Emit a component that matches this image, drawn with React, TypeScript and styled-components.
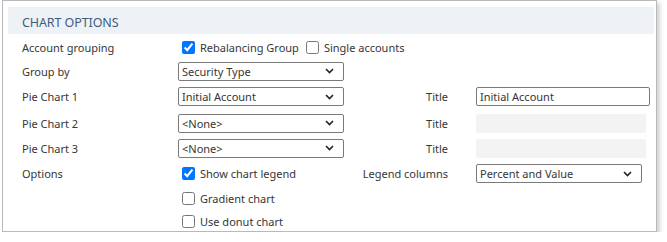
import React from "react";
import styled, { createGlobalStyle } from "styled-components";

const Global = createGlobalStyle`
  html, body { margin: 0; padding: 0; background: #ffffff; }
  body { font-family: "Noto Sans", "Open Sans", Arial, sans-serif; }
`;

const Frame = styled.div`
  margin-left: 2px;
  width: 655px;
  height: 232px;
  box-sizing: border-box;
  border: 1px solid #b9b9b9;
  background: #fff;
  padding: 6px 2px 0 5px;
  box-shadow: 3px 3px 4px rgba(0, 0, 0, 0.18);
  overflow: visible;
`;

const Header = styled.div`
  height: 27px;
  box-sizing: border-box;
  background: #eef2f6;
  display: flex;
  align-items: center;
  padding: 3px 0 0 14px;
  font-size: 12.5px;
  letter-spacing: -0.1px;
  color: #3f5d7d;
`;

const Body = styled.div`
  padding: 2px 0 0 14px;
`;

const Row = styled.div<{ $h: number }>`
  display: grid;
  grid-template-columns: 156px 166px 104px 28px 174px;
  align-items: center;
  height: ${(p) => p.$h}px;
  font-size: 11px;
  color: #363636;
`;

const Label = styled.div`
  grid-column: 1;
`;

const RightLabel = styled.div`
  text-align: right;
  grid-column: 3;
`;

const CheckGroup = styled.div`
  display: flex;
  align-items: center;
  grid-column: 2;
  white-space: nowrap;
  min-width: 0;
`;

const Check = styled.label`
  display: inline-flex;
  align-items: center;
  margin: 0 3px 0 4px;
  gap: 5px;
`;

const Box = styled.input`
  margin: 0;
  width: 13px;
  height: 13px;
`;

const Select = styled.div<{ $col?: number; $w?: number }>`
  grid-column: ${(p) => p.$col ?? 2};
  width: ${(p) => p.$w ?? 166}px;
  height: 19px;
  box-sizing: border-box;
  border: 1px solid #7a7a7a;
  border-radius: 2px;
  display: flex;
  align-items: center;
  justify-content: space-between;
  padding: 0 9px 0 3px;
  background: #fff;
`;

const Text = styled.div<{ $disabled?: boolean }>`
  grid-column: 5;
  height: 19px;
  box-sizing: border-box;
  border: ${(p) => (p.$disabled ? "none" : "1px solid #7a7a7a")};
  border-radius: 2px;
  background: ${(p) => (p.$disabled ? "#f3f3f3" : "#fff")};
  width: ${(p) => (p.$disabled ? 170 : 174)}px;
  display: flex;
  align-items: center;
  padding-left: 3px;
`;

const Chevron = () => (
  <svg width="9" height="6" viewBox="0 0 9 6">
    <path d="M1 1 L4.5 4.5 L8 1" fill="none" stroke="#222" strokeWidth="1.6" />
  </svg>
);

const Dropdown = ({ value, col, w }: { value: string; col?: number; w?: number }) => (
  <Select $col={col} $w={w}>
    <span>{value}</span>
    <Chevron />
  </Select>
);

const CheckItem = ({ label, checked }: { label: string; checked?: boolean }) => (
  <Check>
    <Box type="checkbox" defaultChecked={checked} />
    {label}
  </Check>
);

export default function App() {
  return (
    <>
      <Global />
      <Frame>
        <Header>CHART OPTIONS</Header>
        <Body>
          <Row $h={23}>
            <Label>Account grouping</Label>
            <CheckGroup>
              <CheckItem label="Rebalancing Group" checked />
              <CheckItem label="Single accounts" />
            </CheckGroup>
          </Row>
          <Row $h={24}>
            <Label>Group by</Label>
            <Dropdown value="Security Type" />
          </Row>
          <Row $h={27}>
            <Label>Pie Chart 1</Label>
            <Dropdown value="Initial Account" />
            <RightLabel>Title</RightLabel>
            <Text>Initial Account</Text>
          </Row>
          <Row $h={26}>
            <Label>Pie Chart 2</Label>
            <Dropdown value="<None>" />
            <RightLabel>Title</RightLabel>
            <Text $disabled />
          </Row>
          <Row $h={24}>
            <Label>Pie Chart 3</Label>
            <Dropdown value="<None>" />
            <RightLabel>Title</RightLabel>
            <Text $disabled />
          </Row>
          <Row $h={27}>
            <Label>Options</Label>
            <CheckGroup>
              <CheckItem label="Show chart legend" checked />
            </CheckGroup>
            <RightLabel>Legend columns</RightLabel>
            <Dropdown value="Percent and Value" col={5} />
          </Row>
          <Row $h={23}>
            <CheckGroup>
              <CheckItem label="Gradient chart" />
            </CheckGroup>
          </Row>
          <Row $h={22}>
            <CheckGroup>
              <CheckItem label="Use donut chart" />
            </CheckGroup>
          </Row>
        </Body>
      </Frame>
    </>
  );
}
